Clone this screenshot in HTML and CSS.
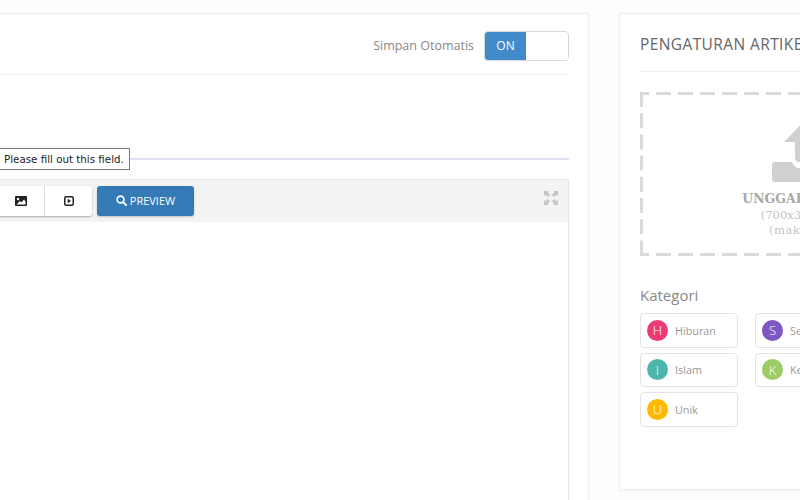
FILE: index.html
```html
<!DOCTYPE html>
<html lang="id">
<head>
<meta charset="utf-8">
<title>Tulis Artikel</title>
<link rel="stylesheet" href="styles.css">
</head>
<body>
<div class="page">
  <main class="card editor-card">
    <header class="top-row">
      <span class="auto-label">Simpan Otomatis</span>
      <div class="switch"><span class="switch-on">ON</span><span class="switch-off"></span></div>
    </header>
    <div class="title-field">
      <div class="tooltip">Please fill out this field.</div>
    </div>
    <section class="editor">
      <div class="toolbar">
        <div class="btn-group">
          <button class="tool-btn tool-image" aria-label="Gambar">
            <svg width="12" height="10" viewBox="0 0 12 10"><rect width="12" height="10" rx="1" fill="#222"/><circle cx="3" cy="3" r="1.2" fill="#fff"/><path d="M1.5 8.500 5 5l1.500 1.500L9 3.500l1.500 2v3z" fill="#fff"/></svg>
          </button>
          <button class="tool-btn tool-video" aria-label="Video">
            <svg width="10" height="10" viewBox="0 0 10 10"><rect x=".75" y=".75" width="8.500" height="8.500" rx="1.500" fill="none" stroke="#222" stroke-width="1.500"/><path d="M3.700 2.700 7 5 3.700 7.300z" fill="#222"/></svg>
          </button>
        </div>
        <button class="preview-btn">
          <svg width="11" height="11" viewBox="0 0 11 11"><circle cx="4.500" cy="4.500" r="3.400" fill="none" stroke="#fff" stroke-width="1.600"/><path d="m7 7 3 3" stroke="#fff" stroke-width="2" stroke-linecap="round"/></svg>
          PREVIEW
        </button>
        <svg class="expand" width="14" height="14" viewBox="0 0 14 14" fill="#c4c4c4"><path d="M0 0h5L3.600 1.400 6 3.800 3.800 6 1.400 3.600 0 5zM14 0v5l-1.400-1.400L10.200 6 8 3.800l2.400-2.400L9 0zM0 14V9l1.400 1.400L3.800 8 6 10.200l-2.400 2.400L5 14zM14 14H9l1.400-1.400L8 10.200 10.200 8l2.400 2.400L14 9z"/></svg>
      </div>
    </section>
  </main>
  <aside class="card settings-card">
    <h2 class="settings-title">PENGATURAN ARTIKEL</h2>
    <div class="upload">
      <svg class="upload-frame" width="340" height="164" viewBox="0 0 340 164" fill="none" stroke="#dadada" stroke-width="3">
        <path d="M0 1.500H340M0 162.500H340" stroke-dasharray="15 7" stroke-dashoffset="6"/>
        <path d="M1.500 0V164M338.500 0V164" stroke-dasharray="15 6.200"/>
      </svg>
      <svg class="upload-icon" width="76" height="68" viewBox="0 0 76 68" fill="#d0d0d0"><path d="M38 0 64 27H53v15c0 3-1 4-3 5H26c-2-1-3-2-3-5V27H12z"/><path d="M3 47h17c1 3 4 6 7 6h22c3 0 6-3 7-6h17c2 0 3 1 3 3v14c0 2-1 3-3 3H3c-2 0-3-1-3-3V50c0-2 1-3 3-3z"/></svg>
      <p class="upload-main">UNGGAH GAMBAR</p>
      <p class="upload-sub">(700x350 piksel)</p>
      <p class="upload-sub upload-limit">(maks 2 MB)</p>
    </div>
    <h3 class="cat-title">Kategori</h3>
    <div class="cat-grid">
      <div class="cat"><span class="dot dot-h">H</span>Hiburan</div>
      <div class="cat"><span class="dot dot-s">S</span>Sejarah</div>
      <div class="cat"><span class="dot dot-i">I</span>Islam</div>
      <div class="cat"><span class="dot dot-k">K</span>Kesehatan</div>
      <div class="cat"><span class="dot dot-u">U</span>Unik</div>
    </div>
  </aside>
</div>
</body>
</html>
```
FILE: styles.css
```css
* { box-sizing: border-box; }
html, body { margin: 0; height: 100%; overflow: hidden; background: #fdfdfd; }
body { font-family: "Open Sans", "Noto Sans", sans-serif; color: #888; }
.page { display: flex; align-items: flex-start; gap: 30px; width: 1040px; margin-left: -40px; padding-top: 13px; }
.card { background: #fff; border: 1px solid #eeeef0; box-shadow: 0 1px 3px rgba(40,40,70,.05); }
.editor-card { flex: 0 0 629px; height: 600px; padding: 0 19px 0 30px; }
.settings-card { flex: 0 0 381px; height: 477px; padding: 0 20px; }
.top-row { display: flex; align-items: center; justify-content: flex-end; gap: 10px; height: 61px; padding-top: 3px; border-bottom: 1px solid #f1f1f3; }
.auto-label { font-size: 12.500px; color: #888; }
.switch { display: flex; width: 85px; height: 30px; border: 1px solid #d8d8d8; border-radius: 4px; overflow: hidden; }
.switch-on { flex: 0 0 41px; display: flex; align-items: center; justify-content: center; background: #428bca; color: #fff; font-size: 12px; }
.switch-off { flex: 1; background: #fff; }
.title-field { position: relative; height: 85px; border-bottom: 2px solid #e0e2f1; }
.tooltip { position: absolute; left: 0; top: 73px; display: flex; align-items: center; width: 139px; height: 22px; padding-left: 12px; background: #fff; border: 1px solid #767676; color: #222; font: 10.300px "DejaVu Sans", sans-serif; white-space: nowrap; }
.editor { height: 420px; margin-top: 19px; border: 1px solid #e8e8e8; }
.toolbar { position: relative; display: flex; gap: 5px; height: 42px; padding-top: 6px; background: #f3f3f3; }
.btn-group { display: flex; height: 30px; box-shadow: 0 1px 2px rgba(0,0,0,.3); border-radius: 3px; }
.tool-btn { display: flex; align-items: center; justify-content: center; height: 30px; padding: 0 0 1px; background: #fff; border: 0; border-right: 1px solid #ddd; }
.tool-image { width: 53px; padding-left: 6px; }
.tool-video { width: 47px; border-right: 0; border-radius: 0 3px 3px 0; }
.preview-btn { display: flex; align-items: center; justify-content: center; gap: 3px; width: 97px; height: 30px; padding: 0 0 2px; background: #337ab7; border: 0; border-radius: 3px; color: #fff; font: 11px "Open Sans", sans-serif; box-shadow: 0 1px 2px rgba(0,0,0,.2); }
.expand { position: absolute; right: 10px; top: 11px; }
.settings-title { display: flex; align-items: center; height: 58px; margin: 0; padding-top: 2px; border-bottom: 1px solid #f0f0f2; font-size: 15.500px; font-weight: 400; color: #666; white-space: nowrap; letter-spacing: .4px; }
.upload { position: relative; display: flex; flex-direction: column; align-items: center; height: 164px; margin-top: 20px; padding-top: 23px; }
.upload-frame { position: absolute; left: 0; top: 0; }
.upload-icon { flex: none; margin-bottom: 7px; }
.upload-main { margin: 0; font: 700 12.500px/18px "DejaVu Serif", serif; color: #a8a8a8; }
.upload-sub { margin: 0; font: 11.500px/15px "DejaVu Serif", serif; color: #c4c4c4; }
.upload-limit { letter-spacing: .6px; }
.cat-title { margin: 29px 0 0; font-size: 15px; line-height: 20px; font-weight: 400; color: #888; }
.cat-grid { display: grid; grid-template-columns: 98px 98px; column-gap: 17px; row-gap: 5px; margin-top: 8px; }
.cat { display: flex; align-items: center; gap: 7px; height: 34.500px; padding-left: 6px; border: 1px solid #e3e3e3; border-radius: 4px; font-size: 10.800px; color: #999; white-space: nowrap; }
.dot { display: flex; flex: none; align-items: center; justify-content: center; width: 21px; height: 21px; border-radius: 50%; color: #fff; font-size: 13px; font-weight: 300; }
.dot-h { background: #ec3a74; }
.dot-s { background: #7e57c2; }
.dot-i { background: #4db6ac; }
.dot-k { background: #9ccc65; }
.dot-u { background: #ffb900; }
```
